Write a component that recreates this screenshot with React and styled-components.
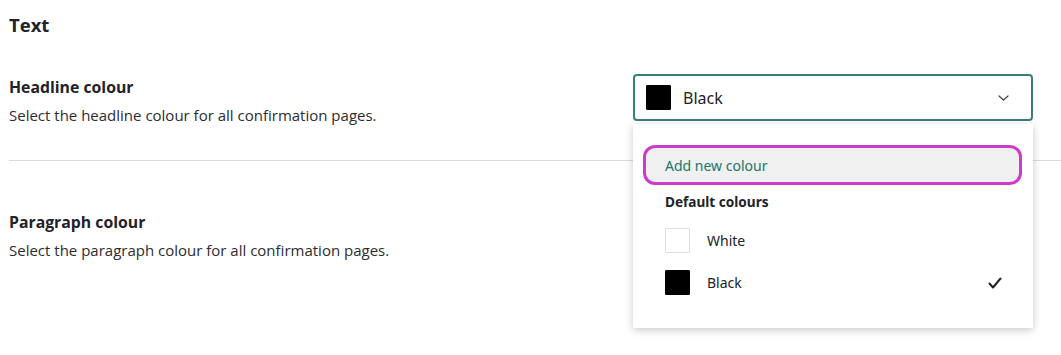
import React from "react";
import styled, { createGlobalStyle } from "styled-components";

const Global = createGlobalStyle`
  html, body { margin: 0; padding: 0; background: #fff; }
  body { font-family: "Open Sans", Lato, sans-serif; color: #222228; }
  * { box-sizing: border-box; }
`;

const Page = styled.div`
  padding: 13px 0 0 9px;
  width: 1061px;
  height: 355px;
  overflow: hidden;
`;

const Heading = styled.h2`
  margin: 0;
  font-size: 18.5px;
  line-height: 24px;
  font-weight: 700;
  color: #222228;
`;

const Row = styled.div`
  display: flex;
  justify-content: space-between;
  align-items: flex-start;
  padding-right: 28px;
  margin-top: ${(p) => p.$top}px;
  padding-bottom: ${(p) => p.$bottom}px;
  border-bottom: ${(p) => (p.$divider ? "1px solid #dcdcdc" : "none")};
`;

const Info = styled.div`
  padding-top: 1px;
`;

const Label = styled.div`
  font-size: 15.8px;
  line-height: 24px;
  font-weight: 700;
  color: #222228;
`;

const Hint = styled.div`
  margin-top: 6px;
  font-size: 15px;
  line-height: 20px;
  color: #2c2c30;
`;

const SelectWrap = styled.div`
  position: relative;
  width: 400px;
  font-family: "Noto Sans", "Open Sans", sans-serif;
`;

const Select = styled.div`
  height: 47px;
  border: 2px solid #3b7d78;
  border-radius: 4px;
  display: flex;
  align-items: center;
  padding: 0 22px 0 11px;
  gap: 12px;
`;

const Swatch = styled.span`
  display: inline-block;
  width: ${(p) => p.$size}px;
  height: ${(p) => p.$size}px;
  background: ${(p) => p.$color};
  border: 1px solid ${(p) => (p.$color === "#fff" ? "#dedede" : "#000")};
  border-radius: 1px;
  flex: none;
`;

const SelectValue = styled.span`
  flex: 1;
  font-size: 16px;
  color: #222228;
`;

const Menu = styled.div`
  position: absolute;
  top: calc(100% + 3px);
  left: 0;
  width: 400px;
  background: #fff;
  box-shadow: 0 2px 8px rgba(0, 0, 0, 0.22);
  padding: 21px 11px 33px 10px;
  z-index: 2;
`;

const AddItem = styled.div`
  height: 40px;
  border: 3px solid #cc3ccc;
  border-radius: 12px;
  background: #f0f0f0;
  display: flex;
  align-items: center;
  padding-left: 19px;
  font-size: 14px;
  color: #21766c;
`;

const GroupTitle = styled.div`
  margin-top: 8px;
  padding-left: 22px;
  font-size: 13.6px;
  line-height: 18px;
  font-weight: 700;
  color: #222228;
`;

const Option = styled.div`
  display: flex;
  align-items: center;
  height: 25px;
  margin-top: ${(p) => p.$top}px;
  padding-left: 22px;
  padding-right: 20px;
  gap: 17px;
  font-size: 14px;
  color: #222228;
`;

const OptionText = styled.span`
  flex: 1;
`;

const Chevron = () => (
  <svg width="11" height="6" viewBox="0 0 11 6" fill="none">
    <path d="M1 1l4.5 4L10 1" stroke="#444" strokeWidth="1.2" strokeLinecap="round" strokeLinejoin="round" />
  </svg>
);

const Check = () => (
  <svg width="14" height="12" viewBox="0 0 14 12" fill="none">
    <path d="M1.5 6.5l3.5 4L12.5 1.5" stroke="#222" strokeWidth="2" strokeLinecap="round" strokeLinejoin="round" />
  </svg>
);

export default function App() {
  return (
    <>
      <Global />
      <Page>
        <Heading>Text</Heading>
        <Row $top={37} $bottom={35} $divider>
          <Info>
            <Label>Headline colour</Label>
            <Hint>Select the headline colour for all confirmation pages.</Hint>
          </Info>
          <SelectWrap>
            <Select>
              <Swatch $size={25} $color="#000" />
              <SelectValue>Black</SelectValue>
              <Chevron />
            </Select>
            <Menu>
              <AddItem>Add new colour</AddItem>
              <GroupTitle>Default colours</GroupTitle>
              <Option $top={17}>
                <Swatch $size={25} $color="#fff" />
                <OptionText>White</OptionText>
              </Option>
              <Option $top={17}>
                <Swatch $size={25} $color="#000" />
                <OptionText>Black</OptionText>
                <Check />
              </Option>
            </Menu>
          </SelectWrap>
        </Row>
        <Row $top={48} $bottom={0}>
          <Info>
            <Label>Paragraph colour</Label>
            <Hint>Select the paragraph colour for all confirmation pages.</Hint>
          </Info>
        </Row>
      </Page>
    </>
  );
}
